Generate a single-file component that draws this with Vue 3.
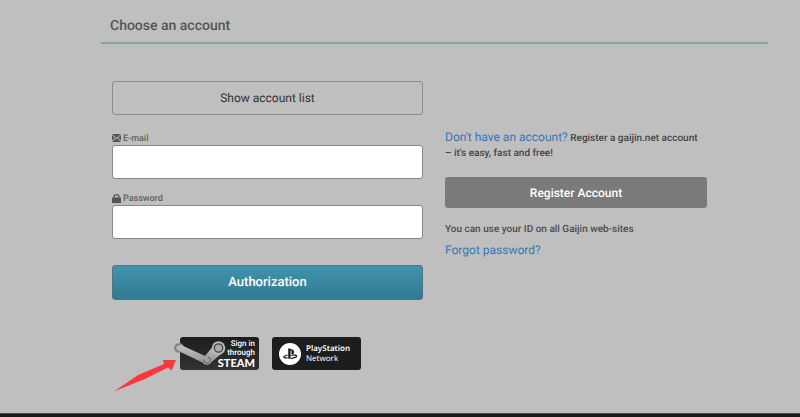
<script setup>
import { ref } from 'vue'

const email = ref('')
const password = ref('')
</script>

<template>
  <div class="page">
    <main class="content">
      <h1 class="title">Choose an account</h1>
      <div class="columns">
        <form class="login" @submit.prevent>
          <button type="button" class="btn outline">Show account list</button>

          <label class="label first" for="email">
            <svg class="icon" viewBox="0 0 9 9" aria-hidden="true">
              <path d="M0 0H9L4.5 4ZM0 1L3 3.7L0 6.6ZM9 1L6 3.7L9 6.6ZM0 8L3.5 4.3L4.5 5.1L5.5 4.3L9 8Z" fill="#555" />
            </svg>
            <span>E-mail</span>
          </label>
          <input id="email" v-model="email" class="field" type="email" />

          <label class="label" for="password">
            <svg class="icon" viewBox="0 0 9 9" aria-hidden="true">
              <path d="M2.1 4.5V2.8a2.4 2.1 0 0 1 4.8 0V4.5" fill="none" stroke="#555" stroke-width="1.3" />
              <rect y="3.4" width="9" height="5.6" rx=".6" fill="#555" />
            </svg>
            <span>Password</span>
          </label>
          <input id="password" v-model="password" class="field" type="password" />

          <button type="submit" class="btn primary">Authorization</button>

          <div class="providers">
            <a class="provider steam" href="#steam">
              <svg class="arm" viewBox="0 0 54 32" aria-hidden="true">
                <defs>
                  <linearGradient id="metal" x1="0" y1="0" x2="0" y2="1">
                    <stop offset="0" stop-color="#c4c4c4" />
                    <stop offset="1" stop-color="#929292" />
                  </linearGradient>
                </defs>
                <circle cx="5" cy="10" r="5" fill="#8d8d8d" />
                <circle cx="5" cy="10" r="3.4" fill="#b8b8b8" stroke="#666" stroke-width=".8" />
                <path d="M6 6.4L31 18L38 9.5L50 13.5L37.5 24L33 26.5L28.5 24.5L5 13.2Z" fill="url(#metal)" />
                <circle cx="33" cy="22" r="4.8" fill="#a2a2a2" />
                <path d="M29.8 21.5a3.3 3.3 0 1 0 4-2.7" fill="none" stroke="#555" stroke-width=".9" />
                <circle cx="44.5" cy="10" r="6.8" fill="#b9b9b9" />
                <circle cx="44.5" cy="10" r="4.2" fill="#aaa" stroke="#444" stroke-width="1.3" />
              </svg>
              <span class="steam-text">Sign in<br />through<strong>STEAM</strong></span>
            </a>
            <a class="provider psn" href="#psn">
              <svg class="ps" viewBox="0 0 22 22" aria-hidden="true">
                <circle cx="11" cy="11" r="11" fill="#fff" />
                <path d="M9.2 5.2L12.8 6.2C14.6 6.8 15.2 7.8 15 9.6C14.8 11.3 13.7 11.6 12.5 11V7.8C12.5 7.2 11.6 7 11.6 7.7V16.3L9.2 15.5Z" fill="#1d1d1d" />
                <path d="M8.6 12L5.8 13C4.3 13.6 4.4 14.5 5.9 14.8C6.9 15.1 7.8 14.9 8.6 14.6M12.3 12.3C14 11.7 15.6 11.8 17 12.4C18.1 12.9 17.8 13.7 16.7 14.1L12.3 15.7" fill="none" stroke="#1d1d1d" stroke-width="1.3" />
              </svg>
              <span class="psn-text"><b>PlayStation</b><br />Network</span>
            </a>
            <svg class="pointer" viewBox="0 0 64 34" aria-hidden="true">
              <path d="M1 32.5L25 16L51 5L50 1L63 1L58.5 11.5L55 8.5L32 20Z" fill="#f83a3c" />
            </svg>
          </div>
        </form>

        <aside class="register">
          <p class="intro"><a href="#register">Don't have an account?</a> Register a gaijin.net account <span class="together">– it's easy, fast and free!</span></p>
          <button type="button" class="btn grey">Register Account</button>
          <p class="note">You can use your ID on all Gaijin web-sites</p>
          <a class="forgot" href="#forgot">Forgot password?</a>
        </aside>
      </div>
    </main>
    <footer class="footer"></footer>
  </div>
</template>

<style>
body {
  margin: 0;
  background: #bfbfbf;
}
</style>

<style scoped>
* {
  box-sizing: border-box;
}
.page {
  display: flex;
  flex-direction: column;
  min-height: 100vh;
  font-family: Roboto, "Liberation Sans", sans-serif;
  text-rendering: geometricPrecision;
  color: #333;
}
.content {
  flex: 1;
  padding: 8px 32px 0 101px;
}
.title {
  margin: 0;
  padding: 9px 9px 7px;
  border-bottom: 2px solid #86a3a3;
  font-size: 14px;
  line-height: 18px;
  font-weight: 500;
  color: #555;
}
.columns {
  display: grid;
  grid-template-columns: 311fr 262fr;
  gap: 22px;
  padding: 37px 61px 0 11px;
}
.login {
  display: flex;
  flex-direction: column;
}
.btn {
  width: 100%;
  height: 34px;
  padding: 0;
  border-radius: 3px;
  font-family: inherit;
  font-size: 12px;
  line-height: 16px;
  text-rendering: inherit;
  cursor: pointer;
}
.outline {
  border: 1px solid #8e8e8e;
  background: transparent;
  color: #333;
}
.label {
  display: flex;
  align-items: center;
  gap: 2px;
  height: 14px;
  margin-top: 12px;
  font-size: 9px;
  line-height: 12px;
  font-weight: 500;
  color: #606060;
}
.label span {
  padding-top: 2px;
}
.label.first {
  margin-top: 16px;
}
.icon {
  width: 9px;
  height: 9px;
}
.field {
  width: 100%;
  height: 34px;
  padding: 0 8px;
  border: 1px solid #888;
  border-radius: 3px;
  background: #fff;
  font: 12px Roboto, sans-serif;
}
.primary {
  height: 35px;
  margin-top: 26px;
  border: 1px solid #4b7684;
  background: linear-gradient(#4293ad, #317b92);
  color: #fff;
  font-size: 13px;
  font-weight: 500;
}
.providers {
  position: relative;
  display: flex;
  justify-content: center;
  gap: 13px;
  margin: 37px 0 0 6px;
}
.provider {
  position: relative;
  display: flex;
  height: 33px;
  border-radius: 3px;
  background: #1d1d1d;
  color: #fff;
  text-decoration: none;
}
.steam {
  width: 79px;
  justify-content: flex-end;
  padding: 2px 4px 0 0;
  background: linear-gradient(#1c1c1c, #333);
}
.arm {
  position: absolute;
  left: -6px;
  top: 1px;
  width: 54px;
  height: 32px;
}
.steam-text {
  position: relative;
  font-size: 8px;
  line-height: 9px;
  font-weight: 500;
  text-align: right;
}
.steam-text strong {
  display: block;
  font-family: Lato, sans-serif;
  font-size: 11px;
  line-height: 13px;
  font-weight: 900;
}
.psn {
  width: 89px;
  align-items: center;
  gap: 5px;
  padding-left: 7px;
}
.ps {
  width: 22px;
  height: 22px;
}
.psn-text {
  font-family: "Noto Sans", sans-serif;
  font-size: 8px;
  line-height: 10px;
}
.psn-text b {
  font-weight: 600;
}
.pointer {
  position: absolute;
  left: -5px;
  top: 22px;
  width: 64px;
  height: 34px;
}
.register {
  display: flex;
  flex-direction: column;
  align-items: flex-start;
  padding-top: 50px;
}
.register a {
  color: #3577b5;
  font-size: 12px;
  line-height: 12px;
  font-weight: 400;
  text-decoration: none;
}
.intro {
  margin: 0;
  font-size: 10px;
  line-height: 15px;
  font-weight: 500;
  color: #444;
}
.together {
  white-space: nowrap;
}
.grey {
  height: 31px;
  margin-top: 16px;
  border: 0;
  background: #7a7a7a;
  color: #fff;
  font-weight: 500;
}
.note {
  margin: 14px 0 4px;
  font-size: 10px;
  line-height: 16px;
  font-weight: 500;
  color: #4c4c4c;
}
.register .forgot {
  line-height: 16px;
}
.footer {
  height: 4px;
  border-top: 1px solid #454847;
  background: #151918;
}
</style>
